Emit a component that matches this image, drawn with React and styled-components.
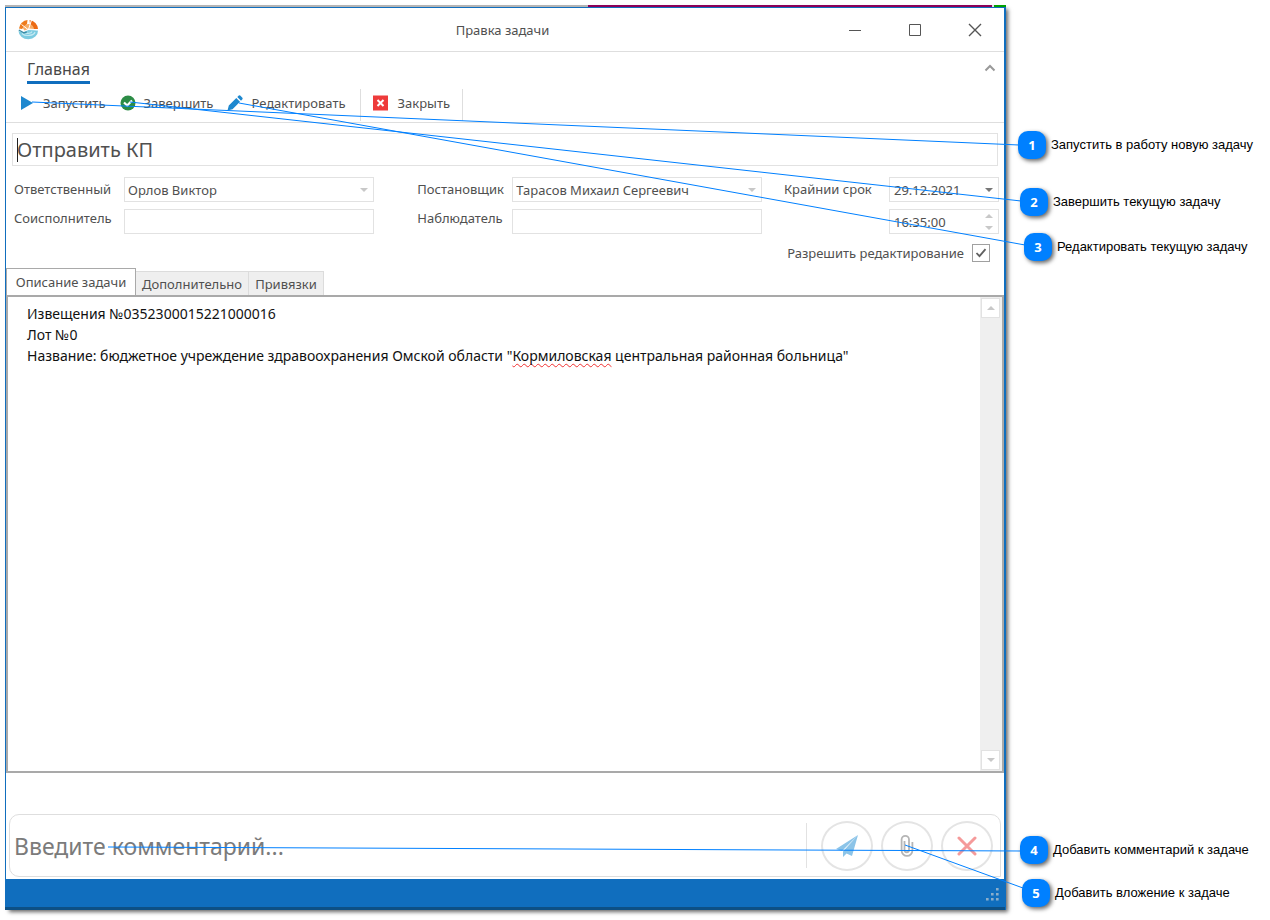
import React, {useState} from 'react';
import styled, {createGlobalStyle} from 'styled-components';

const GlobalStyle = createGlobalStyle`
  * {
    box-sizing: border-box;
  }

  body {
    margin: 0;
    background: #fff;
  }

  button, input, select {
    font: inherit;
    color: inherit;
  }
`

const Page = styled.div`
  position: relative;
  min-height: 100vh;
  display: flex;
  flex-direction: column;
  padding: 5px 264px 10px 5px;
  font-family: "Noto Sans", "Open Sans", sans-serif;
  font-size: 13px;
  line-height: 18px;
  color: #505050;
`

const Frame = styled.div`
  flex: 1;
  display: flex;
  flex-direction: column;
  box-shadow: 3px 3px 4px -1px rgba(0, 0, 0, 0.6);
`

const Backdrop = styled.div`
  height: 2px;
  flex: none;
  background: linear-gradient(to right, #b4b4b4 583px, #8b0058 583px, #8b0058 calc(100% - 14px), #e0e0e0 calc(100% - 14px), #e0e0e0 calc(100% - 12px), #00a000 calc(100% - 12px));
`

const Window = styled.main`
  flex: 1;
  display: flex;
  flex-direction: column;
  background: #fff;
  border: 1px solid #106ebe;
  border-bottom: none;
  border-right-width: 2px;
`

const TitleBar = styled.header`
  height: 44px;
  display: grid;
  grid-template-columns: 174px 1fr 179px;
  align-items: center;
  border-bottom: 1px solid #dedede;
`

const LogoBox = styled.div`
  padding-left: 12px;
  display: flex;
`

const WindowTitle = styled.h1`
  margin: 0;
  font-size: 13px;
  font-weight: 400;
  text-align: center;
`

const WindowButtons = styled.div`
  display: grid;
  grid-template-columns: repeat(3, 60px);
`

const PlainButton = styled.button`
  display: flex;
  align-items: center;
  justify-content: center;
  padding: 0;
  border: none;
  background: none;
  cursor: pointer;
`

const Ribbon = styled.div`
  border-bottom: 1px solid #dedede;
`

const RibbonTabs = styled.nav`
  display: flex;
  justify-content: space-between;
  align-items: center;
  height: 37px;
  padding: 0 8px 0 21px;
`

const RibbonTab = styled.a`
  height: 27px;
  border-bottom: 3px solid #106ebe;
  font-size: 16px;
  line-height: 24px;
  color: #484848;
  text-decoration: none;
`

const CollapseButton = styled(PlainButton)`
  align-self: flex-start;
  height: 32px;
`

const RibbonTools = styled.div`
  display: flex;
  height: 33px;
  padding-left: 13px;
`

const ToolGroup = styled.div`
  display: flex;
  gap: 14px;
  padding: 0 ${props => props.$end}px 4px 0;
  margin-right: 10px;
  border-right: 1px solid #dedede;
  height: 32px;
`

const ToolButton = styled(PlainButton)`
  gap: 8px;
  height: 28px;
`

const TitleRow = styled.div`
  display: flex;
  padding: 10px 6px 0;
`

const TaskTitle = styled.input`
  flex: 1;
  min-width: 0;
  height: 33px;
  padding: 0 4px;
  border: 1px solid #e2e2e2;
  background: linear-gradient(#222, #222) 4px 4px / 1px 24px no-repeat;
  font-size: 20px;
  outline: none;
`

const Fields = styled.div`
  display: grid;
  grid-template-columns: 110px 250px 2fr 95px 250px 1fr 105px 110px;
  row-gap: 7px;
  padding: 11px 5px 0 8px;
`

const Label = styled.label`
  grid-column: ${props => props.$col};
  padding-top: ${props => props.$tight ? 0 : 3}px;
  white-space: nowrap;
`

const Field = styled.div`
  grid-column: ${props => props.$col};
  display: flex;
  align-items: center;
  height: 25px;
  padding-right: 5px;
  border: 1px solid #e2e2e2;
`

const Select = styled.select`
  flex: 1;
  height: 23px;
  padding: 0 3px;
  border: none;
  background: none;
  appearance: none;
  outline: none;
`

const TextInput = styled.input`
  flex: 1;
  min-width: 0;
  height: 23px;
  padding: 0 4px;
  border: none;
  background: none;
  outline: none;
`

const Spin = styled.div`
  display: flex;
  flex-direction: column;
  gap: 8px;
`

const AllowRow = styled.label`
  display: flex;
  justify-content: flex-end;
  align-items: center;
  gap: 8px;
  height: 18px;
  margin: 10px 14px 0 0;
`

const Check = styled.input`
  appearance: none;
  width: 18px;
  height: 18px;
  margin: 0;
  border: 1px solid #a0a0a0;

  &:checked {
    background: url("data:image/svg+xml,%3Csvg xmlns='http://www.w3.org/2000/svg' viewBox='0 0 16 16'%3E%3Cpath d='M3.5 8l3 3.2 6-7' fill='none' stroke='%23606060' stroke-width='1.8'/%3E%3C/svg%3E") center / 16px no-repeat;
  }
`

const Tabs = styled.div`
  display: flex;
  align-items: flex-end;
  height: 27px;
  margin-top: 6px;
`

const Tab = styled.button`
  height: ${props => props.$active ? 27 : 24}px;
  width: ${props => props.$width}px;
  padding: 0;
  white-space: nowrap;
  border: 1px solid ${props => props.$active ? '#a9a9a9' : '#dcdcdc'};
  border-left-width: ${props => props.$active ? 1 : 0}px;
  border-bottom: none;
  background: ${props => props.$active ? '#fff' : '#efefef'};
`

const Editor = styled.div`
  flex: 1;
  display: flex;
  border: 2px solid #a9a9a9;
`

const Description = styled.div`
  flex: 1;
  padding: 6px 19px;
  font-size: 14px;
  line-height: 21px;
  color: #111;
  outline: none;

  p {
    margin: 0;
  }
`

const Misspelled = styled.span`
  text-decoration: underline wavy #f03030 1px;
  text-underline-offset: 2px;
  text-decoration-skip-ink: none;
`

const ScrollBar = styled.div`
  display: flex;
  flex-direction: column;
  justify-content: space-between;
  padding: 1px 2px 1px 1px;
  background: #efefef;
`

const ScrollButton = styled(PlainButton)`
  width: 19px;
  height: 20px;
  border: 1px solid #e2e2e2;
  background: #fff;
`

const CommentBox = styled.form`
  display: flex;
  align-items: center;
  gap: 8px;
  height: 63px;
  margin: 41px 3px 2px;
  padding-right: 7px;
  border: 1px solid #dedede;
  border-radius: 10px 10px 0 10px;
`

const CommentInput = styled.input`
  flex: 1;
  min-width: 0;
  height: 45px;
  padding: 0 4px;
  margin-right: 6px;
  border: none;
  border-right: 1px solid #e2e2e2;
  background: none;
  font-size: 23px;
  outline: none;

  &::placeholder {
    color: #7b7b7b;
    opacity: 1;
  }
`

const RoundButton = styled(PlainButton)`
  width: 52px;
  height: 50px;
  border: 2px solid #e4e4e4;
  border-radius: 50%;
`

const StatusBar = styled.footer`
  display: flex;
  justify-content: flex-end;
  align-items: flex-end;
  height: 31px;
  padding: 0 6px 5px;
  margin: 0 -1px;
  background: #106ebe;
  border-bottom: 3px solid #0d5085;
`

const Leaders = styled.svg`
  position: absolute;
  inset: 0;
  width: 100%;
  height: 100%;
  pointer-events: none;

  line {
    stroke: #0080ff;
    stroke-width: 1px;
    vector-effect: non-scaling-stroke;
  }
`

const Callout = styled.div`
  position: absolute;
  top: ${props => props.$top}px;
  left: calc(100% - ${props => props.$right}px);
  display: flex;
  align-items: center;
  gap: 5px;
  font-family: "Liberation Sans", Arial, sans-serif;
  font-size: 13px;
  line-height: 20px;
  color: #000;
  white-space: nowrap;
`

const Badge = styled.b`
  display: flex;
  align-items: center;
  justify-content: center;
  width: 28px;
  height: 28px;
  border-radius: 10px;
  background: #0080ff;
  box-shadow: 2px 2px 4px rgba(0, 0, 0, 0.6);
  font-family: "Noto Sans", sans-serif;
  color: #fff;
`

const Arrow = ({up, color = '#c8c8c8'}) => (
  <svg width="8" height="4" viewBox="0 0 8 4">
    <path d={up ? 'M0 4L4 0l4 4z' : 'M0 0l4 4 4-4z'} fill={color}/>
  </svg>
)

const Logo = () => (
  <svg width="21" height="21" viewBox="0 0 21 21" fill="none">
    <path d="M.500 12l4 1.500 6-2.500 9.500.500a9.700 8.500 0 0 1-19.500.500z" fill="#7ccbe0"/>
    <path d="M4 14.500a7 4 0 0 0 13-1.500M7 13.500a4 2.300 0 0 0 7-1" stroke="#c4e9f2" strokeWidth="1.200"/>
    <path d="M.800 11l5 2.800 3-.800" stroke="#3a8ba5" strokeWidth="1.300"/>
    <path d="M1 9.500A9.500 9.500 0 0 1 9.500 1l-.500 4-5 5z" fill="#ee7b1c"/>
    <path d="M11.500 1a9.500 9.500 0 0 1 8.500 9h-4.500L12 5z" fill="#ec6a14"/>
    <path d="M5 9.500a6 6 0 0 1 6-4.500 5.500 5.500 0 0 1 5 5.500l-5.500-.500-4 1.500z" fill="#f8ae68"/>
    <path d="M3.500 5.500l6.500 5M13.500 1l-3 9.500M10.500 10l9 .800" stroke="#fff" strokeWidth="1"/>
  </svg>
)

const Grip = () => (
  <svg width="14" height="14" viewBox="0 0 14 14" fill="#8aaecb">
    <path d="M11 0h2.600v2.600H11zM6 5h2.600v2.600H6zM11 5h2.600v2.600H11zM1 10h2.600v2.600H1zM6 10h2.600v2.600H6zM11 10h2.600v2.600H11z"/>
  </svg>
)

const callouts = [
  {id: 1, text: 'Запустить в работу новую задачу', top: 131, right: 252, from: [32, 102], to: [1019, 145]},
  {id: 2, text: 'Завершить текущую задачу', top: 188, right: 250, from: [130, 102], to: [1021, 201]},
  {id: 3, text: 'Редактировать текущую задачу', top: 233, right: 246, from: [239, 103], to: [1025, 245]},
  {id: 4, text: 'Добавить комментарий к задаче', top: 836, right: 250, from: [108, 847], to: [1021, 851]},
  {id: 5, text: 'Добавить вложение к задаче', top: 879, right: 248, from: [905, 845], to: [1023, 888]},
]

const App = () => {
  const [title, setTitle] = useState('Отправить КП');
  const [date, setDate] = useState('29.12.2021');
  const [time, setTime] = useState('16:35:00');
  const [allow, setAllow] = useState(true);
  const [tab, setTab] = useState(0);

  return (
    <>
      <GlobalStyle/>
      <Page>
        <Frame>
          <Backdrop/>
          <Window>
            <TitleBar>
              <LogoBox><Logo/></LogoBox>
              <WindowTitle>Правка задачи</WindowTitle>
              <WindowButtons>
                <PlainButton aria-label="Свернуть">
                  <svg width="14" height="14" stroke="#555"><path d="M1 7.500h12"/></svg>
                </PlainButton>
                <PlainButton aria-label="Развернуть">
                  <svg width="14" height="14" stroke="#555" fill="none"><path d="M1.500 1.500h11v11h-11z"/></svg>
                </PlainButton>
                <PlainButton aria-label="Закрыть окно">
                  <svg width="14" height="14" stroke="#555" strokeWidth="1.400"><path d="M1 1l12 12M13 1L1 13"/></svg>
                </PlainButton>
              </WindowButtons>
            </TitleBar>

            <Ribbon>
              <RibbonTabs>
                <RibbonTab href="#main">Главная</RibbonTab>
                <CollapseButton aria-label="Свернуть ленту">
                  <svg width="12" height="8" fill="none" stroke="#999" strokeWidth="2"><path d="M1.500 6.500L6 2l4.500 4.500"/></svg>
                </CollapseButton>
              </RibbonTabs>
              <RibbonTools>
                <ToolGroup $end={14}>
                  <ToolButton>
                    <svg width="16" height="16"><path d="M2 1l12 7-12 7z" fill="#1e88cf"/></svg>
                    Запустить
                  </ToolButton>
                  <ToolButton>
                    <svg width="16" height="16">
                      <circle cx="8" cy="8" r="7.500" fill="#2c8c46"/>
                      <path d="M4 7.500l3.200 3L12 5.500" fill="none" stroke="#fff" strokeWidth="2.200"/>
                    </svg>
                    Завершить
                  </ToolButton>
                  <ToolButton>
                    <svg width="16" height="16" fill="#1e88cf">
                      <path d="M.500 15.500l1.300-5L9.300 3 13 6.700 5.500 14.200zM10.300 2L11.800.600q.700-.600 1.400 0l2.200 2.200q.600.700 0 1.400L14 5.700z"/>
                    </svg>
                    Редактировать
                  </ToolButton>
                </ToolGroup>
                <ToolGroup $end={12}>
                  <ToolButton>
                    <svg width="19" height="16">
                      <path d="M2 .500h15v15H2z" fill="#ee3b3b"/>
                      <path d="M6.500 5l6 6M12.500 5l-6 6" stroke="#fff" strokeWidth="2"/>
                    </svg>
                    Закрыть
                  </ToolButton>
                </ToolGroup>
              </RibbonTools>
            </Ribbon>

            <TitleRow>
              <TaskTitle aria-label="Название задачи" value={title} onChange={e => setTitle(e.target.value)}/>
            </TitleRow>

            <Fields>
              <Label htmlFor="owner" $col={1}>Ответственный</Label>
              <Field $col={2}>
                <Select id="owner"><option>Орлов Виктор</option></Select>
                <Arrow/>
              </Field>
              <Label htmlFor="author" $col={4}>Постановщик</Label>
              <Field $col={5}>
                <Select id="author"><option>Тарасов Михаил Сергеевич</option></Select>
                <Arrow/>
              </Field>
              <Label htmlFor="date" $col={7}>Крайнии срок</Label>
              <Field $col={8}>
                <TextInput id="date" value={date} onChange={e => setDate(e.target.value)}/>
                <Arrow color="#777"/>
              </Field>
              <Label htmlFor="helper" $col={1} $tight>Соисполнитель</Label>
              <Field $col={2}><TextInput id="helper"/></Field>
              <Label htmlFor="watcher" $col={4} $tight>Наблюдатель</Label>
              <Field $col={5}><TextInput id="watcher"/></Field>
              <Field $col={8}>
                <TextInput aria-label="Время" value={time} onChange={e => setTime(e.target.value)}/>
                <Spin><Arrow up/><Arrow/></Spin>
              </Field>
            </Fields>

            <AllowRow>
              Разрешить редактирование
              <Check type="checkbox" checked={allow} onChange={() => setAllow(!allow)}/>
            </AllowRow>

            <Tabs role="tablist">
              <Tab role="tab" $active={tab === 0} $width={130} onClick={() => setTab(0)}>Описание задачи</Tab>
              <Tab role="tab" $active={tab === 1} $width={113} onClick={() => setTab(1)}>Дополнительно</Tab>
              <Tab role="tab" $active={tab === 2} $width={75} onClick={() => setTab(2)}>Привязки</Tab>
            </Tabs>
            <Editor>
              <Description role="textbox" aria-label="Описание задачи" contentEditable suppressContentEditableWarning spellCheck={false}>
                <p>Извещения №0352300015221000016</p>
                <p>Лот №0</p>
                <p>Название: бюджетное учреждение здравоохранения Омской области "<Misspelled>Кормиловская</Misspelled> центральная районная больница"</p>
              </Description>
              <ScrollBar>
                <ScrollButton aria-label="Вверх"><Arrow up/></ScrollButton>
                <ScrollButton aria-label="Вниз"><Arrow/></ScrollButton>
              </ScrollBar>
            </Editor>

            <CommentBox onSubmit={e => e.preventDefault()}>
              <CommentInput aria-label="Комментарий" placeholder="Введите комментарий..."/>
              <RoundButton aria-label="Отправить">
                <svg width="24" height="24" fill="#8cc4e8">
                  <path d="M23 1L1 15l6 2zM23 1L8 17.500V23l3.500-3.500L17 22z"/>
                </svg>
              </RoundButton>
              <RoundButton type="button" aria-label="Вложение">
                <svg width="14" height="24" fill="none" stroke="#b5b5b5" strokeWidth="1.800">
                  <path d="M4.500 7v9a2 2 0 0 0 4.500 0V5.500a3.700 3.700 0 0 0-7.400 0v11a5.200 5.200 0 0 0 10.800 0V8"/>
                </svg>
              </RoundButton>
              <RoundButton type="button" aria-label="Отменить">
                <svg width="20" height="20" stroke="#f59a9a" strokeWidth="3" strokeLinecap="round"><path d="M2 2l16 16M18 2L2 18"/></svg>
              </RoundButton>
            </CommentBox>

            <StatusBar><Grip/></StatusBar>
          </Window>
        </Frame>

        <Leaders viewBox="0 0 1270 920" preserveAspectRatio="none">
          {callouts.map(({id, from, to}) => (
            <line key={id} x1={from[0]} y1={from[1]} x2={to[0]} y2={to[1]}/>
          ))}
        </Leaders>
        {callouts.map(({id, text, top, right}) => (
          <Callout key={id} $top={top} $right={right}><Badge>{id}</Badge>{text}</Callout>
        ))}
      </Page>
    </>
  );
};


export default App;
